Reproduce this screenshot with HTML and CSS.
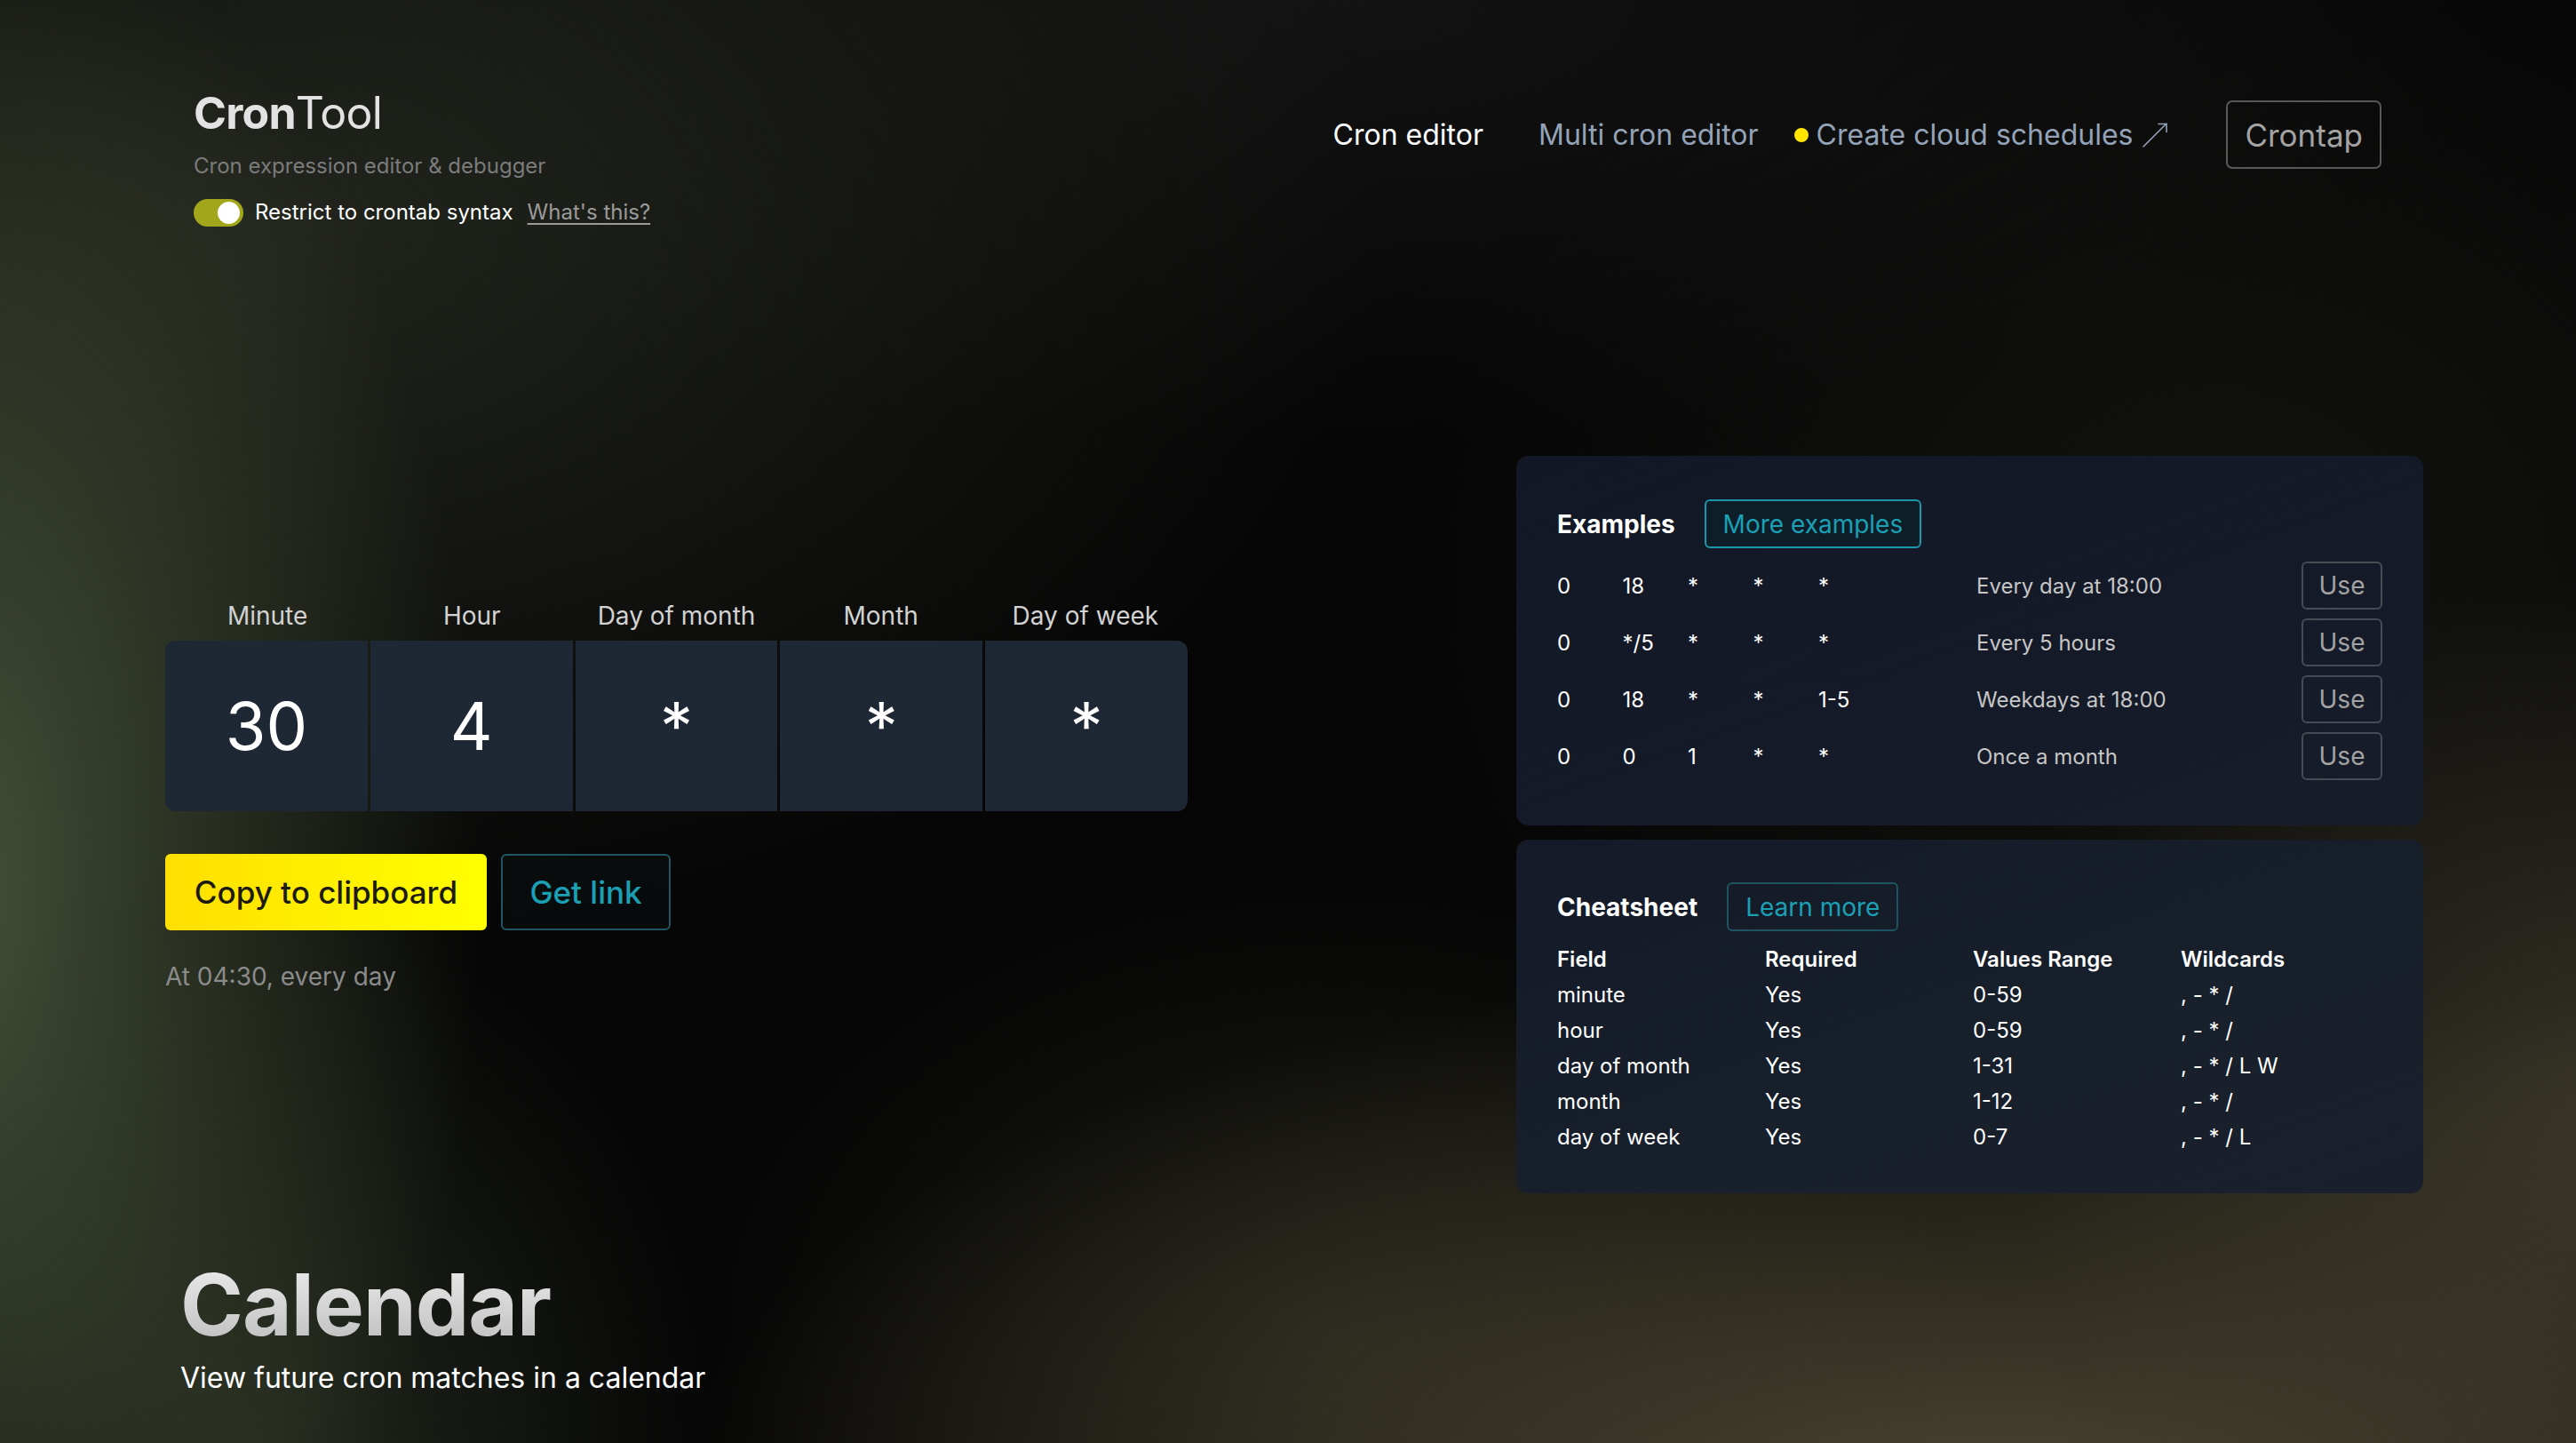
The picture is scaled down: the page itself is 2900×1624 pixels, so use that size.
FILE: index.html
```html
<!DOCTYPE html>
<html lang="en">
<head>
<meta charset="utf-8">
<title>CronTool</title>
<link rel="stylesheet" href="styles.css">
</head>
<body>
<div class="page">
  <header class="header">
    <div class="brand">
      <div class="logo"><b>Cron</b>Tool</div>
      <div class="tagline">Cron expression editor &amp; debugger</div>
      <div class="restrict">
        <span class="toggle"><span class="knob"></span></span>
        <span class="restrict-label">Restrict to crontab syntax</span>
        <a class="whats">What's this?</a>
      </div>
    </div>
    <nav class="nav">
      <a class="nav-link active">Cron editor</a>
      <a class="nav-link">Multi cron editor</a>
      <a class="nav-link cloud"><span class="dot"></span>Create cloud schedules<svg class="ext" viewBox="0 0 32 30" width="32" height="30"><path d="M3 28 L29 2 M20 2.5 H29 V11.5" fill="none" stroke="#94a3b8" stroke-width="1.6" stroke-linecap="round" stroke-linejoin="round"/></svg></a>
      <a class="crontap">Crontap</a>
    </nav>
  </header>

  <main class="main">
    <section class="editor">
      <div class="labels">
        <span>Minute</span><span>Hour</span><span>Day of month</span><span>Month</span><span>Day of week</span>
      </div>
      <div class="fields">
        <div class="cell first">30</div>
        <div class="cell">4</div>
        <div class="cell">*</div>
        <div class="cell">*</div>
        <div class="cell last">*</div>
      </div>
      <div class="actions">
        <button class="btn-copy">Copy to clipboard</button>
        <button class="btn-link">Get link</button>
      </div>
      <p class="human">At 04:30, every day</p>
    </section>

    <aside class="side">
      <div class="card">
        <div class="card-head">
          <h2 class="card-title">Examples</h2>
          <a class="btn-more">More examples</a>
        </div>
        <div class="examples">
          <div class="ex-row"><span class="expr"><span>0</span><span>18</span><span>*</span><span>*</span><span>*</span></span><span class="desc">Every day at 18:00</span><button class="use">Use</button></div>
          <div class="ex-row"><span class="expr"><span>0</span><span>*/5</span><span>*</span><span>*</span><span>*</span></span><span class="desc">Every 5 hours</span><button class="use">Use</button></div>
          <div class="ex-row"><span class="expr"><span>0</span><span>18</span><span>*</span><span>*</span><span>1-5</span></span><span class="desc">Weekdays at 18:00</span><button class="use">Use</button></div>
          <div class="ex-row"><span class="expr"><span>0</span><span>0</span><span>1</span><span>*</span><span>*</span></span><span class="desc">Once a month</span><button class="use">Use</button></div>
        </div>
      </div>
      <div class="card cheat">
        <div class="card-head">
          <h2 class="card-title">Cheatsheet</h2>
          <a class="btn-learn">Learn more</a>
        </div>
        <table class="table">
          <thead><tr><th>Field</th><th>Required</th><th>Values Range</th><th>Wildcards</th></tr></thead>
          <tbody>
            <tr><td>minute</td><td>Yes</td><td>0-59</td><td>, - * /</td></tr>
            <tr><td>hour</td><td>Yes</td><td>0-59</td><td>, - * /</td></tr>
            <tr><td>day of month</td><td>Yes</td><td>1-31</td><td>, - * / L W</td></tr>
            <tr><td>month</td><td>Yes</td><td>1-12</td><td>, - * /</td></tr>
            <tr><td>day of week</td><td>Yes</td><td>0-7</td><td>, - * / L</td></tr>
          </tbody>
        </table>
      </div>
    </aside>
  </main>

  <section class="calendar">
    <h1 class="cal-title">Calendar</h1>
    <p class="cal-sub">View future cron matches in a calendar</p>
  </section>
</div>
</body>
</html>
```

FILE: styles.css
```css
* { box-sizing: border-box; }
html, body { margin: 0; padding: 0; }
body {
  width: 2900px;
  height: 1624px;
  overflow: hidden;
  font-family: Inter, "Noto Sans", sans-serif;
  color: #fff;
  background-color: #060606;
  background-image:
    radial-gradient(ellipse 1500px 620px at 2250px 1700px, rgba(80, 74, 52, 0.95), rgba(80, 74, 52, 0) 100%),
    radial-gradient(ellipse 700px 600px at 2950px 1250px, rgba(66, 62, 46, 0.8), rgba(66, 62, 46, 0) 100%),
    radial-gradient(ellipse 600px 1150px at -60px 1000px, rgba(70, 82, 56, 1), rgba(70, 82, 56, 0) 100%),
    radial-gradient(ellipse 500px 600px at 300px 1624px, rgba(40, 47, 34, 0.8), rgba(40, 47, 34, 0) 100%),
    radial-gradient(ellipse 1200px 800px at 350px 250px, rgba(36, 39, 31, 0.9), rgba(36, 39, 31, 0) 100%),
    radial-gradient(ellipse 1300px 500px at 1500px 0px, rgba(22, 22, 22, 0.8), rgba(22, 22, 22, 0) 100%),
    radial-gradient(ellipse 900px 800px at 2500px 650px, rgba(22, 22, 20, 0.8), rgba(22, 22, 20, 0) 100%),
    radial-gradient(ellipse 700px 500px at 1500px 1500px, rgba(34, 34, 26, 0.7), rgba(34, 34, 26, 0) 100%);
}
a { cursor: pointer; }
button { font-family: inherit; cursor: pointer; }

.page { padding-top: 97px; }

/* header */
.header {
  display: flex;
  justify-content: space-between;
  align-items: flex-start;
  padding: 0 219px 0 218px;
}
.logo {
  font-size: 50px;
  line-height: 60px;
  color: #e2e2e2;
  font-weight: 400;
  letter-spacing: -0.8px;
}
.logo b { font-weight: 700; }
.tagline {
  margin-top: 12px;
  font-size: 24px;
  line-height: 36px;
  color: #7b7b7b;
}
.restrict {
  margin-top: 16px;
  display: flex;
  align-items: center;
  font-size: 24px;
  line-height: 36px;
  color: #fff;
}
.toggle {
  width: 56px;
  height: 31px;
  border-radius: 16px;
  background: #a1a61b;
  display: flex;
  align-items: center;
  justify-content: flex-end;
  padding-right: 4px;
  margin-right: 13px;
}
.knob {
  width: 25px;
  height: 25px;
  border-radius: 50%;
  background: #fff;
}
.whats {
  margin-left: 16px;
  color: #9a9a9a;
  text-decoration: underline;
  text-underline-offset: 4px;
}

.nav {
  display: flex;
  align-items: center;
  margin-top: 16px;
  font-size: 32px;
}
.nav-link {
  color: #94a3b8;
  white-space: nowrap;
}
.nav-link.active { color: #fff; margin-right: 62px; }
.nav-link.cloud { display: flex; align-items: center; margin-left: 40px; margin-right: 64px; }
.dot {
  width: 16px;
  height: 16px;
  border-radius: 50%;
  background: #ffe600;
  margin-right: 9px;
}
.ext { margin-left: 9px; }
.crontap {
  height: 77px;
  display: flex;
  align-items: center;
  padding: 0 19px;
  border: 2px solid #585858;
  border-radius: 7px;
  color: #a3a3a3;
  font-size: 35px;
}

/* main */
.main {
  display: grid;
  grid-template-columns: 1151px 1021px;
  column-gap: 370px;
  padding-left: 186px;
  margin-top: 256px;
}
.editor { margin-top: 163px; }
.labels {
  display: grid;
  grid-template-columns: repeat(5, 1fr);
  font-size: 28px;
  line-height: 34px;
  color: #d2d2d2;
  text-align: center;
  margin-bottom: 11px;
}
.fields {
  display: grid;
  grid-template-columns: repeat(5, 1fr);
  column-gap: 3px;
  height: 192px;
}
.cell {
  background: #1e2734;
  display: flex;
  align-items: center;
  justify-content: center;
  font-size: 74px;
  font-weight: 400;
  color: #fff;
}
.cell.first { border-radius: 12px 0 0 12px; }
.cell.last { border-radius: 0 12px 12px 0; }

.actions {
  display: flex;
  gap: 16px;
  margin-top: 48px;
}
.btn-copy {
  height: 86px;
  width: 362px;
  border: none;
  border-radius: 6px;
  background: linear-gradient(90deg, #ffdf00, #ffff00);
  color: #1b1b12;
  font-size: 35px;
  font-weight: 500;
}
.btn-link {
  height: 86px;
  width: 191px;
  border: 2px solid #1f5661;
  border-radius: 6px;
  background: rgba(10, 20, 22, 0.4);
  color: #1b9fb3;
  font-size: 35px;
  font-weight: 500;
}
.human {
  margin: 32px 0 0;
  font-size: 28px;
  line-height: 40px;
  color: #8b8b8b;
}

/* cards */
.side { display: flex; flex-direction: column; gap: 16px; }
.card {
  background: linear-gradient(160deg, #121826, #141a27 60%, #171d29);
  border-radius: 14px;
  padding: 49px 46px 51px;
}
.card.cheat { padding: 48px 46px 44px; background: linear-gradient(160deg, #141a27, #18202c 60%, #1a202b); }
.card-head {
  display: flex;
  align-items: center;
  gap: 33px;
}
.card-title {
  margin: 0;
  font-size: 28px;
  font-weight: 700;
  color: #fff;
}
.btn-more, .btn-learn {
  height: 55px;
  display: flex;
  align-items: center;
  padding: 0 19px;
  border-radius: 6px;
  font-size: 28px;
  color: #1ba0b5;
}
.btn-more {
  border: 2px solid #1a97ab;
  background: #0e1e29;
}
.btn-learn {
  border: 2px solid #1e5461;
}
.examples {
  margin-top: 15px;
  display: flex;
  flex-direction: column;
  gap: 10px;
}
.ex-row {
  display: flex;
  align-items: center;
  height: 54px;
  font-size: 24px;
}
.expr {
  display: grid;
  grid-template-columns: repeat(5, 73.5px);
  width: 472px;
  color: #fff;
}
.desc { flex: 1; color: #c6c6c6; }
.use {
  height: 54px;
  width: 91px;
  border: 2px solid #474b53;
  border-radius: 6px;
  background: transparent;
  color: #a2a2a2;
  font-size: 28px;
}
.table {
  margin-top: 11px;
  width: 936px;
  border-collapse: collapse;
  table-layout: fixed;
  font-size: 24px;
}
.table th, .table td {
  height: 40px;
  padding: 0;
  text-align: left;
  color: #fff;
}
.table th { font-weight: 600; }
.table td { font-weight: 400; }

/* calendar */
.calendar {
  padding-left: 203px;
  margin-top: 71px;
}
.cal-title {
  margin: 0;
  font-size: 96px;
  line-height: 108px;
  font-weight: 700;
  letter-spacing: -1px;
  background: linear-gradient(180deg, #eeeeee, #bcbcbc);
  -webkit-background-clip: text;
  background-clip: text;
  color: transparent;
  display: inline-block;
}
.cal-sub {
  margin: 6px 0 0;
  font-size: 32px;
  line-height: 45px;
  color: #fff;
}
```
